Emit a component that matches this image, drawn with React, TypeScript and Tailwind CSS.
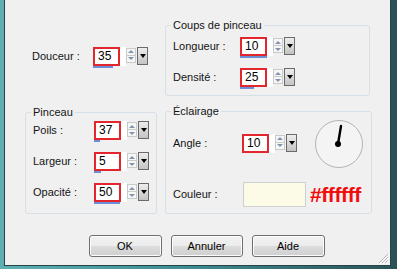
import React from "react";

function Spin({ value, bar }: { value: string; bar: number }) {
  return (
    <div className="flex flex-col">
      <div className="flex h-[19px] items-start">
        <div className="h-[19px] w-[27px] border-2 border-[#e3262e] bg-white pl-[3px] text-[12px] leading-[15px] text-black">
          {value}
        </div>
        <div className="h-[19px] w-[6px] bg-white" />
        <div className="mt-[1px] flex h-[15px] w-[10px] flex-col border border-[#cacaca] bg-[#f6f6f6]">
          <div className="flex flex-1 items-center justify-center border-b border-[#cacaca]">
            <div className="h-0 w-0 border-b-[3px] border-l-[3px] border-r-[3px] border-b-[#8592ab] border-l-transparent border-r-transparent" />
          </div>
          <div className="flex flex-1 items-center justify-center">
            <div className="h-0 w-0 border-t-[3px] border-l-[3px] border-r-[3px] border-t-[#8592ab] border-l-transparent border-r-transparent" />
          </div>
        </div>
        <div className="ml-[1px] flex h-[18px] w-[11px] justify-center border border-[#6a6a6a] bg-gradient-to-b from-[#ededed] to-[#c4c4c4] pt-[6px]">
          <div className="h-0 w-0 border-t-[4px] border-l-[3.5px] border-r-[3.5px] border-t-black border-l-transparent border-r-transparent" />
        </div>
      </div>
      <div className="h-[2px] bg-[#6b8fd6]" style={{ width: bar }} />
    </div>
  );
}

function Row({ label, w, children }: { label: string; w: string; children: React.ReactNode }) {
  return (
    <div className="flex items-start">
      <span className={`${w} shrink-0 leading-[19px]`}>{label}</span>
      {children}
    </div>
  );
}

function Btn({ children, w }: { children: React.ReactNode; w: string }) {
  return (
    <div
      className={`${w} flex h-[22px] items-center justify-center rounded-[3px] border border-[#707070] bg-[linear-gradient(to_bottom,#f2f2f2_0%,#ebebeb_50%,#dddddd_50%,#cfcfcf_100%)] text-[11px] text-black shadow-[inset_0_0_0_1px_#fcfcfc]`}
    >
      {children}
    </div>
  );
}

export default function App() {
  return (
    <div className="flex h-[269px] w-[397px] bg-gradient-to-r from-[#5fb0b3] via-[#3d8a8f] to-[#2b5155] pb-[3px] pl-[4px] pr-[6px] font-['Liberation_Sans',Arial,sans-serif] text-[11px] text-[#141414]">
      <div className="relative flex flex-1 flex-col border-x border-b border-[#24464a] bg-[#f0f0f0] px-[20px] pt-[18px]">
        <div className="grid grid-cols-[132px_205px] gap-x-[8px] gap-y-[8px]">
          {/* Douceur */}
          <div className="flex items-center pl-[7px]">
            <Row label="Douceur :" w="w-[61px]">
              <Spin value="35" bar={20} />
            </Row>
          </div>
          {/* Coups de pinceau */}
          <fieldset className="rounded-[3px] border border-[#d5dfe5] px-[7px] pb-[6px]">
            <legend className="ml-[-2px] px-[2px] leading-[14px]">Coups de pinceau</legend>
            <div className="mt-[5px] flex flex-col gap-[10px]">
              <Row label="Longueur :" w="w-[67px]">
                <Spin value="10" bar={27} />
              </Row>
              <Row label="Densité :" w="w-[67px]">
                <Spin value="25" bar={14} />
              </Row>
            </div>
          </fieldset>
          {/* Pinceau */}
          <fieldset className="mt-[1px] rounded-[3px] border border-[#d5dfe5] px-[7px] pb-[6px]">
            <legend className="ml-[-2px] px-[2px] leading-[14px]">Pinceau</legend>
            <div className="mt-[2px] flex flex-col gap-[10px]">
              <Row label="Poils :" w="w-[61px]">
                <Spin value="37" bar={6} />
              </Row>
              <Row label="Largeur :" w="w-[61px]">
                <Spin value="5" bar={7} />
              </Row>
              <Row label="Opacité :" w="w-[61px]">
                <Spin value="50" bar={26} />
              </Row>
            </div>
          </fieldset>
          {/* Éclairage */}
          <fieldset className="rounded-[3px] border border-[#d5dfe5] px-[7px] pb-[6px]">
            <legend className="ml-[-2px] px-[2px] leading-[14px]">Éclairage</legend>
            <div className="mt-[2px] flex flex-col">
              <div className="flex h-[48px] items-center">
                <Row label="Angle :" w="w-[69px]">
                  <Spin value="10" bar={0} />
                </Row>
                <svg width="50" height="50" viewBox="0 0 50 50" className="ml-[17px]">
                  <circle cx="25" cy="25" r="23.5" fill="#f4f4f4" stroke="#b4b4b4" strokeWidth="1" />
                  <line x1="24" y1="25" x2="27" y2="7" stroke="#000" strokeWidth="2.4" strokeLinecap="round" />
                  <circle cx="24" cy="25" r="3" fill="#000" />
                </svg>
              </div>
              <div className="mt-[14px] flex items-center">
                <span className="w-[70px] shrink-0">Couleur :</span>
                <div className="h-[25px] w-[63px] border border-[#cfcfcf] bg-[#fbfbe8]" />
                <span className="ml-[4px] text-[21px] font-bold leading-[25px] tracking-[-0.4px] text-[#f20d0d]">#ffffff</span>
              </div>
            </div>
          </fieldset>
        </div>
        <div className="mt-[21px] flex justify-center gap-[9px] pl-[18px]">
          <Btn w="w-[73px]">OK</Btn>
          <Btn w="w-[72px]">Annuler</Btn>
          <Btn w="w-[73px]">Aide</Btn>
        </div>
        <svg width="12" height="12" viewBox="0 0 12 12" className="absolute bottom-[1px] right-[1px]">
          <line x1="11" y1="2" x2="2" y2="11" stroke="#b8b8b8" strokeWidth="1" />
          <line x1="11" y1="5" x2="5" y2="11" stroke="#b8b8b8" strokeWidth="1" />
          <line x1="11" y1="8" x2="8" y2="11" stroke="#b8b8b8" strokeWidth="1" />
          <line x1="12" y1="3" x2="3" y2="12" stroke="#ffffff" strokeWidth="1" />
          <line x1="12" y1="6" x2="6" y2="12" stroke="#ffffff" strokeWidth="1" />
          <line x1="12" y1="9" x2="9" y2="12" stroke="#ffffff" strokeWidth="1" />
        </svg>
      </div>
    </div>
  );
}
